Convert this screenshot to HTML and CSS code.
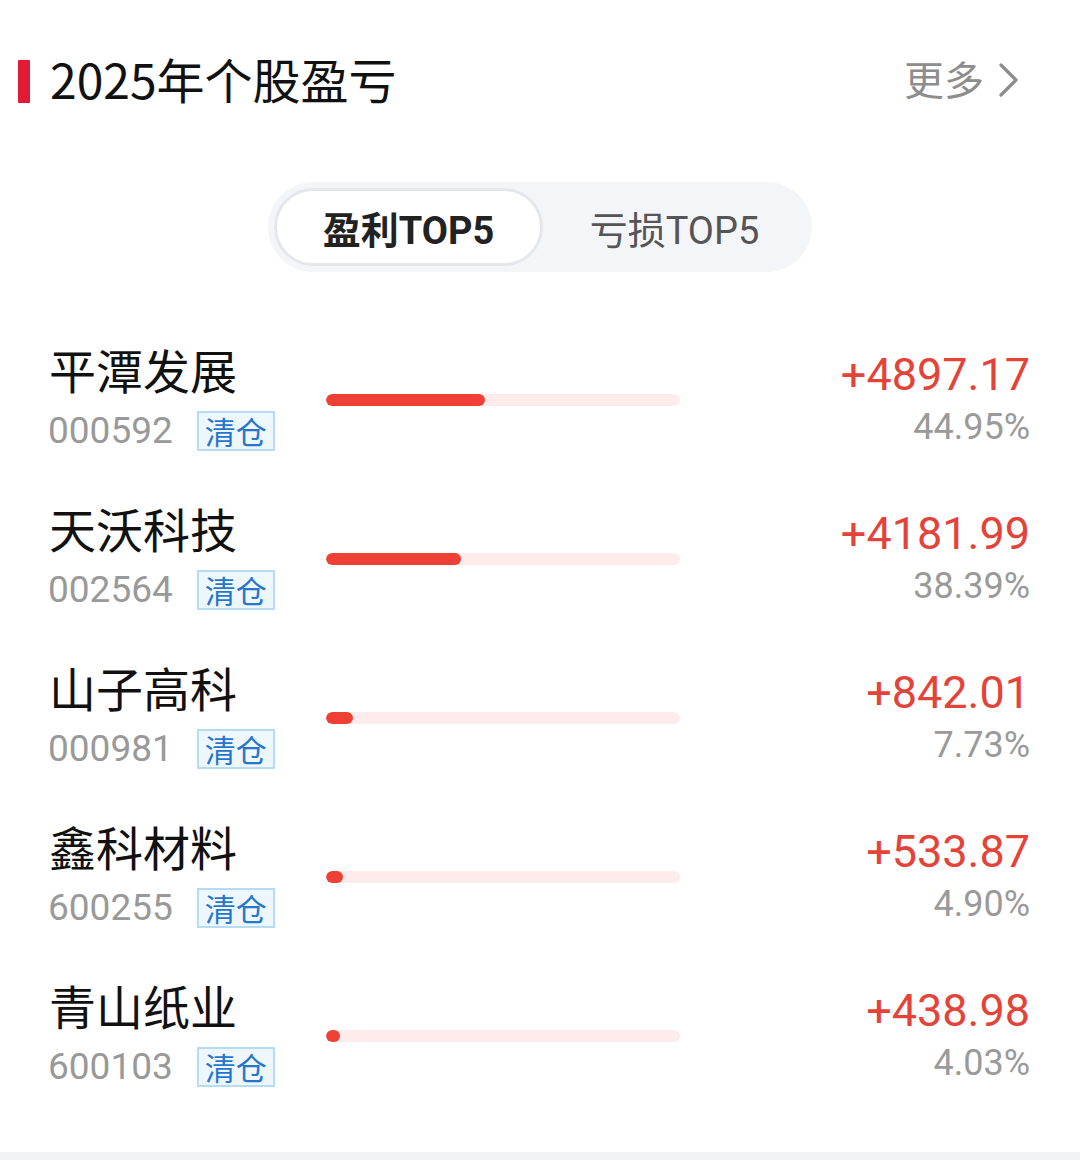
FILE: index.html
```html
<!DOCTYPE html>
<html lang="zh-CN">
<head>
<meta charset="utf-8">
<link rel="stylesheet" href="styles.css">
</head>
<body>
<div class="page">
  <header class="header">
    <div class="title-wrap">
      <span class="title-bar"></span>
      <h1 class="title">2025年个股盈亏</h1>
    </div>
    <div class="more">
      <span>更多</span>
      <svg class="chev" width="22" height="36" viewBox="0 0 22 36"><path d="M3 3 L18 18 L3 33" fill="none" stroke="#8d8d8d" stroke-width="3.2" stroke-linecap="round" stroke-linejoin="round"/></svg>
    </div>
  </header>

  <div class="toggle-row">
    <div class="toggle">
      <div class="tab active">盈利TOP5</div>
      <div class="tab">亏损TOP5</div>
    </div>
  </div>

  <ul class="list">
    <li class="row">
      <div class="left">
        <div class="name">平潭发展</div>
        <div class="meta"><span class="code">000592</span><span class="tag">清仓</span></div>
      </div>
      <div class="bar"><div class="fill" style="width:159px"></div></div>
      <div class="right">
        <div class="value">+4897.17</div>
        <div class="pct">44.95%</div>
      </div>
    </li>
    <li class="row">
      <div class="left">
        <div class="name">天沃科技</div>
        <div class="meta"><span class="code">002564</span><span class="tag">清仓</span></div>
      </div>
      <div class="bar"><div class="fill" style="width:135px"></div></div>
      <div class="right">
        <div class="value">+4181.99</div>
        <div class="pct">38.39%</div>
      </div>
    </li>
    <li class="row">
      <div class="left">
        <div class="name">山子高科</div>
        <div class="meta"><span class="code">000981</span><span class="tag">清仓</span></div>
      </div>
      <div class="bar"><div class="fill" style="width:27px"></div></div>
      <div class="right">
        <div class="value">+842.01</div>
        <div class="pct">7.73%</div>
      </div>
    </li>
    <li class="row">
      <div class="left">
        <div class="name">鑫科材料</div>
        <div class="meta"><span class="code">600255</span><span class="tag">清仓</span></div>
      </div>
      <div class="bar"><div class="fill" style="width:17px"></div></div>
      <div class="right">
        <div class="value">+533.87</div>
        <div class="pct">4.90%</div>
      </div>
    </li>
    <li class="row">
      <div class="left">
        <div class="name">青山纸业</div>
        <div class="meta"><span class="code">600103</span><span class="tag">清仓</span></div>
      </div>
      <div class="bar"><div class="fill" style="width:14px"></div></div>
      <div class="right">
        <div class="value">+438.98</div>
        <div class="pct">4.03%</div>
      </div>
    </li>
  </ul>
  <div class="strip"></div>
</div>
</body>
</html>
```
FILE: styles.css
```css
* { box-sizing: border-box; }
html, body { margin: 0; padding: 0; background: #fff; }
body {
  font-family: Roboto, "Noto Sans CJK SC", sans-serif;
  color: #111;
}
.page { width: 1080px; height: 1160px; overflow: hidden; display: flex; flex-direction: column; }

.header {
  margin-top: 38px;
  height: 80px;
  display: flex;
  align-items: center;
  justify-content: space-between;
  padding: 0 60px 0 18px;
}
.title-wrap { display: flex; align-items: center; gap: 20px; }
.title-bar { width: 12px; height: 43px; background: #e21b34; border-radius: 1px; margin-top: 6px; }
.title {
  margin: 0;
  font-family: "Noto Sans CJK SC", sans-serif;
  font-weight: 400;
  font-size: 48px;
  line-height: 1;
  color: #111;
}
.more {
  display: flex;
  align-items: center;
  gap: 14px;
  font-family: "Noto Sans CJK SC", sans-serif;
  font-size: 40px;
  color: #8d8d8d;
}
.chev { display: block; margin-top: 4px; }

.toggle-row { margin-top: 64px; display: flex; justify-content: center; }
.toggle {
  width: 544px;
  height: 90px;
  padding: 6px;
  border-radius: 45px;
  background: #f4f5f8;
  display: flex;
}
.tab {
  flex: 1;
  display: flex;
  align-items: center;
  justify-content: center;
  font-family: Roboto, "Noto Sans CJK SC", sans-serif;
  font-size: 38px;
  color: #555;
  border-radius: 39px;
}
.tab.active {
  background: #fff;
  border: 3px solid #e5e7ec;
  font-weight: 700;
  color: #222;
}

.list { list-style: none; margin: 48px 0 0; padding: 0; }
.row {
  height: 159px;
  display: flex;
  align-items: center;
  padding: 0 50px;
}
.left { flex: 0 0 276px; padding-bottom: 8px; }
.name {
  font-family: "Noto Sans CJK SC", sans-serif;
  font-size: 47px;
  line-height: 56px;
  color: #111;
  margin-left: -1px;
}
.meta { display: flex; align-items: center; gap: 24px; margin-top: 14px; }
.code { font-size: 37px; line-height: 40px; color: #999; margin-left: -2px; }
.tag {
  width: 78px;
  height: 40px;
  display: flex;
  align-items: center;
  justify-content: center;
  border: 2px solid #b6dcf4;
  background: #eef7fd;
  color: #2677cb;
  font-family: "Noto Sans CJK SC", sans-serif;
  font-size: 31px;
  line-height: 1;
}
.bar {
  flex: 0 0 354px;
  height: 12px;
  border-radius: 6px;
  background: #fdeceb;
  overflow: hidden;
}
.fill { height: 100%; border-radius: 6px; background: #ee4034; }
.right { flex: 1; text-align: right; padding-bottom: 2px; }
.value { font-size: 45px; line-height: 54px; color: #e4433a; }
.pct { font-size: 36px; line-height: 46px; color: #9a9a9a; margin-top: 2px; }

.strip { margin-top: auto; height: 8px; background: #f2f3f6; }
```
